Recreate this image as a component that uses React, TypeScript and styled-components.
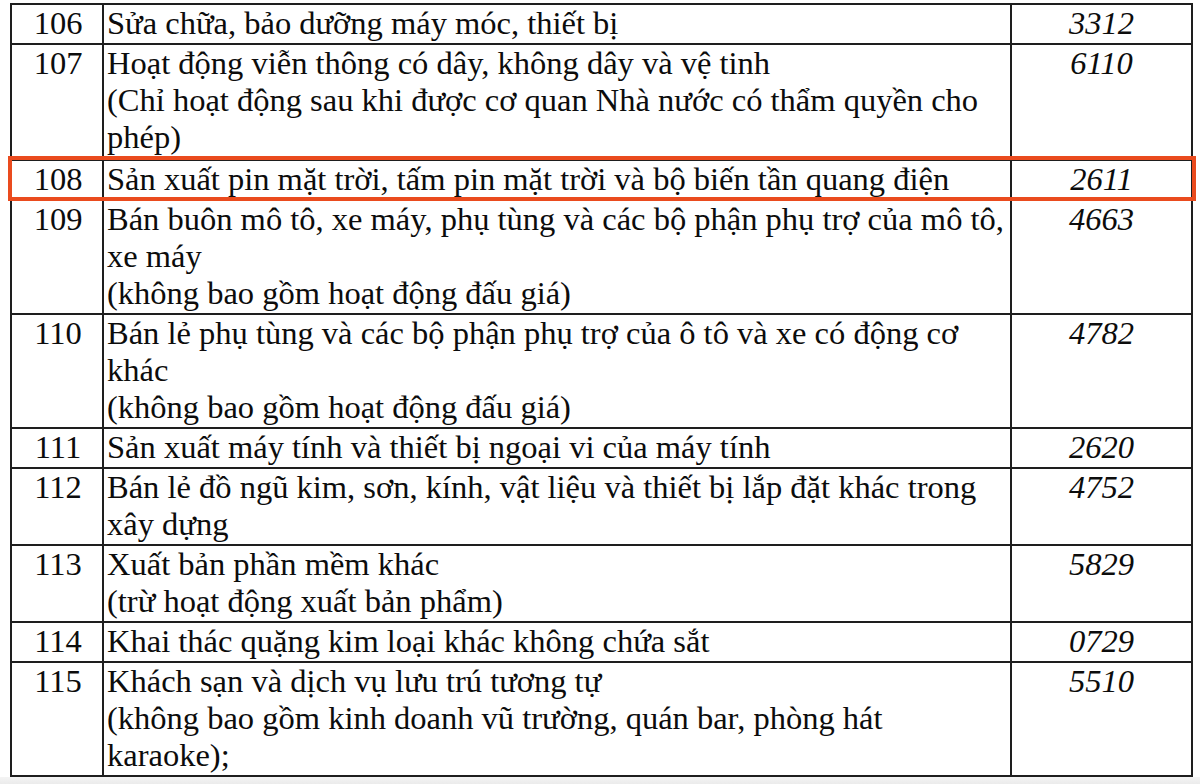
import styled, { createGlobalStyle } from 'styled-components';

const GlobalStyle = createGlobalStyle`
  html, body {
    margin: 0;
    padding: 0;
    background: #ffffff;
  }
  body {
    width: 1200px;
    height: 784px;
    overflow: hidden;
    font-family: "Liberation Serif", "Times New Roman", serif;
    color: #0c0c0c;
  }
`;

type Entry = {
  no: string;
  lines: string[];
  code: string;
  marked?: boolean;
  extra?: number;
};

const rows: Entry[] = [
  { no: '106', lines: ['Sửa chữa, bảo dưỡng máy móc, thiết bị'], code: '3312' },
  {
    no: '107',
    lines: [
      'Hoạt động viễn thông có dây, không dây và vệ tinh',
      '(Chỉ hoạt động sau khi được cơ quan Nhà nước có thẩm quyền cho',
      'phép)',
    ],
    code: '6110',
    extra: 2,
  },
  {
    no: '108',
    lines: ['Sản xuất pin mặt trời, tấm pin mặt trời và bộ biến tần quang điện'],
    code: '2611',
    marked: true,
  },
  {
    no: '109',
    lines: [
      'Bán buôn mô tô, xe máy, phụ tùng và các bộ phận phụ trợ của mô tô,',
      'xe máy',
      '(không bao gồm hoạt động đấu giá)',
    ],
    code: '4663',
  },
  {
    no: '110',
    lines: [
      'Bán lẻ phụ tùng và các bộ phận phụ trợ của ô tô và xe có động cơ',
      'khác',
      '(không bao gồm hoạt động đấu giá)',
    ],
    code: '4782',
  },
  { no: '111', lines: ['Sản xuất máy tính và thiết bị ngoại vi của máy tính'], code: '2620' },
  {
    no: '112',
    lines: ['Bán lẻ đồ ngũ kim, sơn, kính, vật liệu và thiết bị lắp đặt khác trong', 'xây dựng'],
    code: '4752',
  },
  { no: '113', lines: ['Xuất bản phần mềm khác', '(trừ hoạt động xuất bản phẩm)'], code: '5829' },
  { no: '114', lines: ['Khai thác quặng kim loại khác không chứa sắt'], code: '0729' },
  {
    no: '115',
    lines: [
      'Khách sạn và dịch vụ lưu trú tương tự',
      '(không bao gồm kinh doanh vũ trường, quán bar, phòng hát',
      'karaoke);',
    ],
    code: '5510',
  },
];

const Page = styled.div`
  display: flex;
  flex-direction: column;
  height: 784px;
`;

const Sheet = styled.div`
  padding: 3px 7px 0 10px;
  background: #ffffff;
`;

const Table = styled.div`
  display: flex;
  flex-direction: column;
  border: 2px solid #1e1e1e;
`;

const Row = styled.div<{ $marked?: boolean }>`
  position: relative;
  display: grid;
  grid-template-columns: 92px 908px 1fr;
  border-bottom: 2px solid #1e1e1e;
  font-size: 32.5px;
  line-height: 37px;

  &:last-child {
    border-bottom: none;
  }

  ${({ $marked }) =>
    $marked &&
    `
    &::after {
      content: "";
      position: absolute;
      top: -5px;
      left: -4px;
      right: -5px;
      bottom: -2px;
      border: 4px solid #ea4b1e;
      pointer-events: none;
    }
  `}
`;

const NoCell = styled.div`
  text-align: center;
  border-right: 2px solid #1e1e1e;
  padding-left: 2px;
`;

const TextCell = styled.div<{ $extra?: number }>`
  border-right: 2px solid #1e1e1e;
  padding: 0 0 ${({ $extra }) => 1 + ($extra ?? 0)}px 3px;
  white-space: nowrap;
`;

const CodeCell = styled.div`
  text-align: center;
  font-style: italic;
`;

const Footer = styled.div`
  flex: 1;
  background: linear-gradient(#f4f4f4, #ebebeb);
`;

export default function App() {
  return (
    <>
      <GlobalStyle />
      <Page>
        <Sheet>
          <Table>
            {rows.map((r) => (
              <Row key={r.no} $marked={r.marked}>
                <NoCell>{r.no}</NoCell>
                <TextCell $extra={r.extra}>
                  {r.lines.map((l, i) => (
                    <div key={i}>{l}</div>
                  ))}
                </TextCell>
                <CodeCell>{r.code}</CodeCell>
              </Row>
            ))}
          </Table>
        </Sheet>
        <Footer />
      </Page>
    </>
  );
}
